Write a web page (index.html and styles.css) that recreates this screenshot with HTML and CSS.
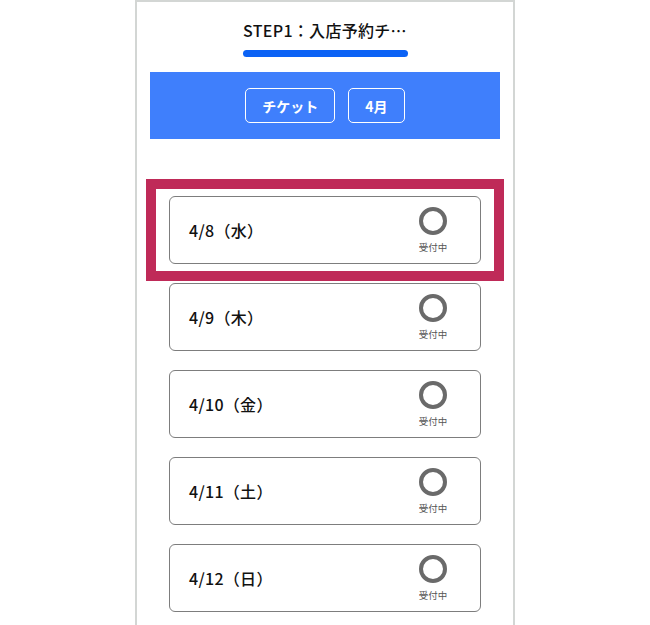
FILE: index.html
```html
<!DOCTYPE html>
<html lang="ja">
<head>
    <meta charset="UTF-8">
    <meta name="viewport" content="width=device-width, initial-scale=1.0">
    <title>STEP1：入店予約チケット</title>
    <link rel="stylesheet" href="styles.css">
</head>
<body>
    <div class="phone">
        <header class="step-header">
            <h1 class="step-title">STEP1：入店予約チ…</h1>
            <div class="step-progress"></div>
        </header>

        <!-- filters -->
        <div class="filter-bar">
            <button class="filter-btn" type="button">チケット</button>
            <button class="filter-btn" type="button">4月</button>
        </div>

        <ul class="day-list">
            <li class="day-card is-picked">
                <span class="day-date">4/8（水）</span>
                <span class="day-status"><span class="status-ring"></span><span class="status-text">受付中</span></span>
            </li>
            <li class="day-card">
                <span class="day-date">4/9（木）</span>
                <span class="day-status"><span class="status-ring"></span><span class="status-text">受付中</span></span>
            </li>
            <li class="day-card">
                <span class="day-date">4/10（金）</span>
                <span class="day-status"><span class="status-ring"></span><span class="status-text">受付中</span></span>
            </li>
            <li class="day-card">
                <span class="day-date">4/11（土）</span>
                <span class="day-status"><span class="status-ring"></span><span class="status-text">受付中</span></span>
            </li>
            <li class="day-card">
                <span class="day-date">4/12（日）</span>
                <span class="day-status"><span class="status-ring"></span><span class="status-text">受付中</span></span>
            </li>
        </ul>
    </div>
</body>
</html>
```

FILE: styles.css
```css
* {
    margin: 0;
    padding: 0;
    box-sizing: border-box;
}
body {
    font-family: 'Noto Sans CJK JP', 'Noto Sans', sans-serif;
    background: #fff;
    color: #111;
    overflow: hidden;
}
.phone {
    width: 380px;
    min-height: 100vh;
    margin-left: 135px;
    border: 2px solid #d3d6d4;
    border-bottom: none;
    background: #fff;
}
.step-header {
    display: flex;
    flex-direction: column;
    align-items: center;
    padding-top: 16px;
}
.step-title {
    font-size: 16px;
    font-weight: 500;
    line-height: 24px;
    letter-spacing: 0.3px;
}
.step-progress {
    width: 165px;
    height: 7px;
    margin-top: 8px;
    border-radius: 4px;
    background: #0b62f5;
}
.filter-bar {
    display: flex;
    justify-content: center;
    align-items: center;
    gap: 13px;
    height: 67px;
    margin: 15px 13px 0;
    background: #3f7ffc;
}
.filter-btn {
    height: 35px;
    padding: 0 16px;
    font-family: inherit;
    font-size: 14px;
    font-weight: 700;
    color: #fff;
    background: transparent;
    border: 1px solid #fff;
    border-radius: 5px;
}
.day-list {
    list-style: none;
    display: flex;
    flex-direction: column;
    gap: 19px;
    margin: 57px 32px 0;
}
.day-card {
    position: relative;
    display: flex;
    align-items: center;
    justify-content: space-between;
    height: 68px;
    padding: 0 27px 0 19px;
    border: 1px solid #7d7d7d;
    border-radius: 6px;
}
.day-card.is-picked::after {
    content: '';
    position: absolute;
    top: -18px;
    bottom: -18px;
    left: -24px;
    right: -24px;
    border: 10px solid #bf2a58;
}
.day-date {
    font-size: 16px;
    font-weight: 500;
    letter-spacing: 0.3px;
}
.day-status {
    display: flex;
    flex-direction: column;
    align-items: center;
    gap: 6px;
    width: 40px;
}
.status-ring {
    width: 28px;
    height: 28px;
    border: 4.5px solid #6a6a6a;
    border-radius: 50%;
}
.status-text {
    font-size: 9.5px;
    line-height: 12px;
    color: #555;
}
```
